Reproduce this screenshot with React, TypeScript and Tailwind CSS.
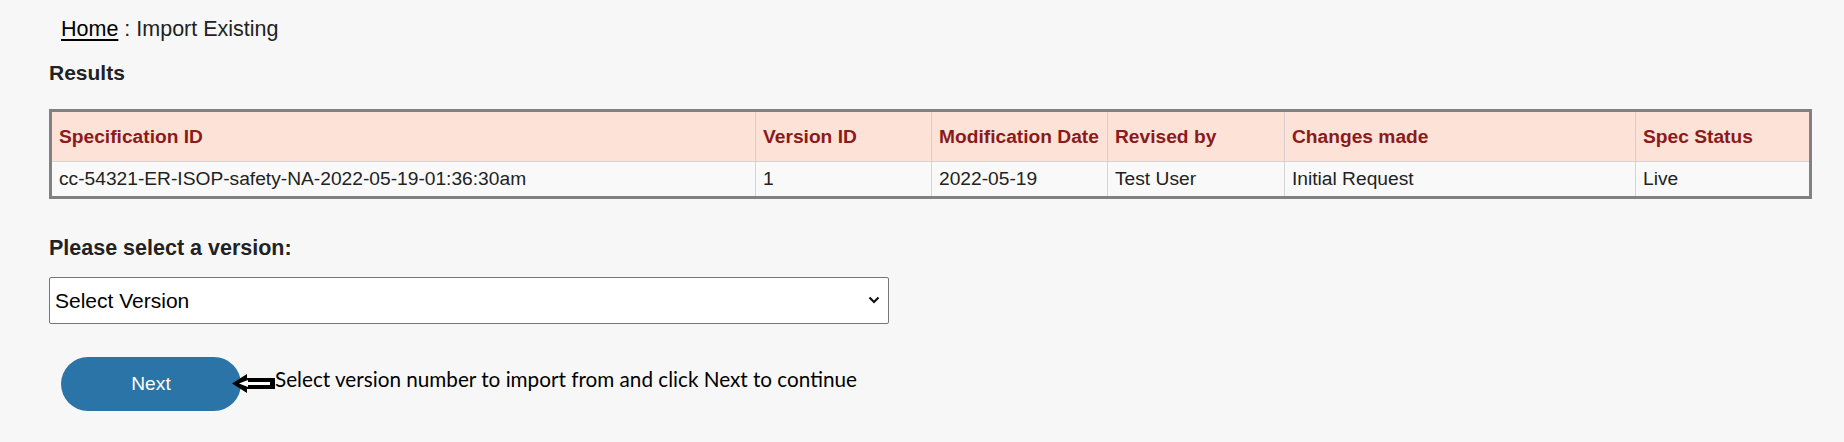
import React from "react";

const headers = [
  "Specification ID",
  "Version ID",
  "Modification Date",
  "Revised by",
  "Changes made",
  "Spec Status",
];

const row = [
  "cc-54321-ER-ISOP-safety-NA-2022-05-19-01:36:30am",
  "1",
  "2022-05-19",
  "Test User",
  "Initial Request",
  "Live",
];

const colWidths = ["703px", "176px", "176px", "177px", "351px", "174px"];

export default function App() {
  return (
    <div className="min-h-[442px] w-full bg-[#f7f7f7] pl-[49px] font-['Liberation_Sans',Arial,sans-serif] text-[#222222]">
      <div className="pt-[16px] pl-[12px] text-[21.5px] leading-[26px] text-[#222222]">
        <a href="#" className="text-black underline underline-offset-[3px]">
          Home
        </a>{" "}
        : Import Existing
      </div>

      <h2 className="mt-[18px] text-[21px] font-bold leading-[26px] text-[#222222]">Results</h2>

      <table className="mt-[23px] w-[1763px] table-fixed border-separate border-spacing-0 border-[3px] border-[#818181] text-[19.2px] leading-[22px]">
        <colgroup>
          {colWidths.map((w, i) => (
            <col key={i} style={{ width: w }} />
          ))}
        </colgroup>
        <thead>
          <tr className="bg-[#fde2d7]">
            {headers.map((h, i) => (
              <th
                key={h}
                className={`h-[49px] px-[7px] text-left align-middle font-bold text-[#8a1b1b] ${
                  i > 0 ? "border-l border-[#d4cfcc]" : ""
                }`}
              >
                {h}
              </th>
            ))}
          </tr>
        </thead>
        <tbody>
          <tr className="bg-[#f9f9f9]">
            {row.map((c, i) => (
              <td
                key={i}
                className={`h-[35px] border-t border-[#d4d4d4] px-[7px] align-middle text-[#222222] ${
                  i > 0 ? "border-l" : ""
                }`}
              >
                {c}
              </td>
            ))}
          </tr>
        </tbody>
      </table>

      <div className="mt-[36px] text-[21.5px] font-bold leading-[26px] text-[#222222]">
        Please select a version:
      </div>

      <div className="relative mt-[16px] w-[840px]">
        <select
          className="h-[47px] w-full appearance-none rounded-[2px] border border-[#767676] bg-white pl-[5px] text-[21px] text-black outline-none"
          defaultValue=""
        >
          <option value="">Select Version</option>
          <option value="1">1</option>
        </select>
        <svg
          className="pointer-events-none absolute right-[9px] top-[18px]"
          width="12"
          height="10"
          viewBox="0 0 12 10"
        >
          <path d="M1.5 2.5 L6 7 L10.5 2.5" fill="none" stroke="#111" strokeWidth="2.2" />
        </svg>
      </div>

      <div className="mt-[33px] flex items-center pl-[12px] pb-[31px]">
        <button className="h-[54px] w-[180px] rounded-full bg-[#2a74a8] text-[19.2px] text-white">
          Next
        </button>
        <svg className="relative z-10 ml-[-9px] mt-[-1px]" width="43" height="20" viewBox="0 0 43 20">
          <path d="M0 9.5 L15 0 L15 4 L43 4 L43 15 L15 15 L15 19 Z" fill="#000000" />
          <path d="M7 9.5 L16 6 L16 8 L38 8 L38 11 L16 11 L16 13 Z" fill="#ffffff" />
        </svg>
        <span className="mt-[-11px] font-['Lato',sans-serif] text-[20.7px] leading-[24px] text-black">
          Select version number to import from and click Next to continue
        </span>
      </div>
    </div>
  );
}
